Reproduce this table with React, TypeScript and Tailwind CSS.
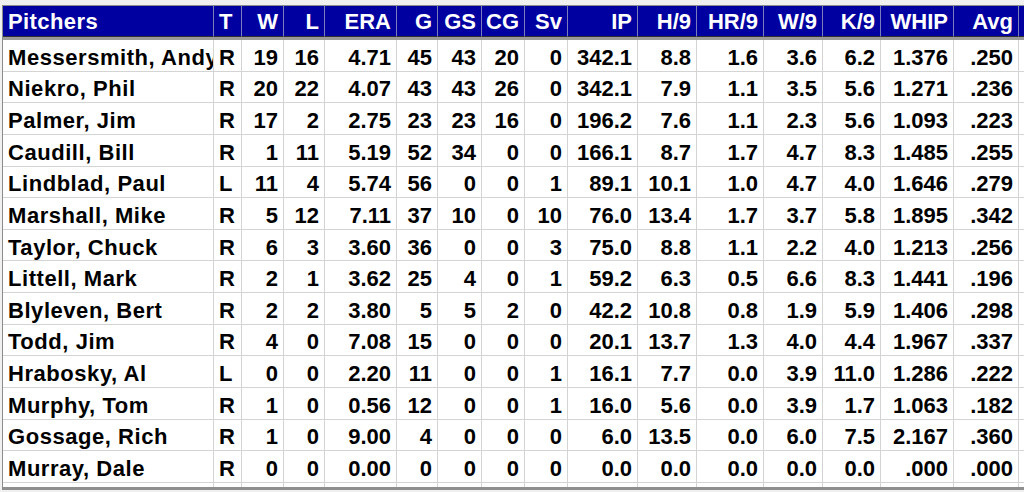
import React from "react";

type Col = { label: string; align: "left" | "right" };

const columns: Col[] = [
  { label: "Pitchers", align: "left" },
  { label: "T", align: "left" },
  { label: "W", align: "right" },
  { label: "L", align: "right" },
  { label: "ERA", align: "right" },
  { label: "G", align: "right" },
  { label: "GS", align: "right" },
  { label: "CG", align: "right" },
  { label: "Sv", align: "right" },
  { label: "IP", align: "right" },
  { label: "H/9", align: "right" },
  { label: "HR/9", align: "right" },
  { label: "W/9", align: "right" },
  { label: "K/9", align: "right" },
  { label: "WHIP", align: "right" },
  { label: "Avg", align: "right" },
];

const rows: string[][] = [
  ["Messersmith, Andy", "R", "19", "16", "4.71", "45", "43", "20", "0", "342.1", "8.8", "1.6", "3.6", "6.2", "1.376", ".250"],
  ["Niekro, Phil", "R", "20", "22", "4.07", "43", "43", "26", "0", "342.1", "7.9", "1.1", "3.5", "5.6", "1.271", ".236"],
  ["Palmer, Jim", "R", "17", "2", "2.75", "23", "23", "16", "0", "196.2", "7.6", "1.1", "2.3", "5.6", "1.093", ".223"],
  ["Caudill, Bill", "R", "1", "11", "5.19", "52", "34", "0", "0", "166.1", "8.7", "1.7", "4.7", "8.3", "1.485", ".255"],
  ["Lindblad, Paul", "L", "11", "4", "5.74", "56", "0", "0", "1", "89.1", "10.1", "1.0", "4.7", "4.0", "1.646", ".279"],
  ["Marshall, Mike", "R", "5", "12", "7.11", "37", "10", "0", "10", "76.0", "13.4", "1.7", "3.7", "5.8", "1.895", ".342"],
  ["Taylor, Chuck", "R", "6", "3", "3.60", "36", "0", "0", "3", "75.0", "8.8", "1.1", "2.2", "4.0", "1.213", ".256"],
  ["Littell, Mark", "R", "2", "1", "3.62", "25", "4", "0", "1", "59.2", "6.3", "0.5", "6.6", "8.3", "1.441", ".196"],
  ["Blyleven, Bert", "R", "2", "2", "3.80", "5", "5", "2", "0", "42.2", "10.8", "0.8", "1.9", "5.9", "1.406", ".298"],
  ["Todd, Jim", "R", "4", "0", "7.08", "15", "0", "0", "0", "20.1", "13.7", "1.3", "4.0", "4.4", "1.967", ".337"],
  ["Hrabosky, Al", "L", "0", "0", "2.20", "11", "0", "0", "1", "16.1", "7.7", "0.0", "3.9", "11.0", "1.286", ".222"],
  ["Murphy, Tom", "R", "1", "0", "0.56", "12", "0", "0", "1", "16.0", "5.6", "0.0", "3.9", "1.7", "1.063", ".182"],
  ["Gossage, Rich", "R", "1", "0", "9.00", "4", "0", "0", "0", "6.0", "13.5", "0.0", "6.0", "7.5", "2.167", ".360"],
  ["Murray, Dale", "R", "0", "0", "0.00", "0", "0", "0", "0", "0.0", "0.0", "0.0", "0.0", "0.0", ".000", ".000"],
];

const gridCols =
  "grid grid-cols-[211px_28px_42px_41px_72px_41px_44px_43px_43px_70px_59px_67px_59px_58px_73px_65px_1fr]";

const App = () => {
  return (
    <div
      className="w-[1024px] h-[492px] overflow-hidden bg-[#f0f0f0] pt-[5px] pl-[2px]"
      style={{ fontFamily: '"Liberation Sans", Arial, sans-serif' }}
    >
      <div className={`${gridCols} border-t border-l border-[#8c8c8c] bg-white`}>
        {/* header */}
        {columns.map((c, i) => (
          <div
            key={c.label}
            className={`h-[31px] flex items-center px-[5px] bg-[#0000a0] text-white font-bold text-[22px] border-r border-b border-r-[#7c7cba] border-b-[#303030] whitespace-nowrap overflow-hidden ${
              c.align === "right" ? "justify-end" : "justify-start"
            } ${i === 0 ? "tracking-[0.4px]" : ""}`}
          >
            {c.label}
          </div>
        ))}
        <div className="h-[31px] bg-[#0000a0] border-b border-[#303030]" />
        <div className="col-span-full h-[3px] bg-[#9a9a9a]" />

        {/* body */}
        {rows.map((r) => (
          <React.Fragment key={r[0]}>
            {r.map((v, i) => (
              <div
                key={i}
                className={`h-[31.64px] flex items-center pt-[4px] px-[5px] text-black font-bold text-[22px] border-r border-b border-[#d4d4d4] whitespace-nowrap overflow-hidden ${
                  columns[i].align === "right" ? "justify-end" : "justify-start"
                } ${i === 0 ? "tracking-[0.55px]" : ""}`}
              >
                {v}
              </div>
            ))}
            <div className="h-[31.64px] border-b border-[#d4d4d4]" />
          </React.Fragment>
        ))}

        {/* partial next row */}
        {columns.map((c) => (
          <div key={c.label} className="h-[4px] border-r border-[#d4d4d4]" />
        ))}
        <div className="h-[4px]" />
        <div className="col-span-full h-[3px] bg-[#8f8f8f]" />
      </div>
    </div>
  );
};

export default App;
